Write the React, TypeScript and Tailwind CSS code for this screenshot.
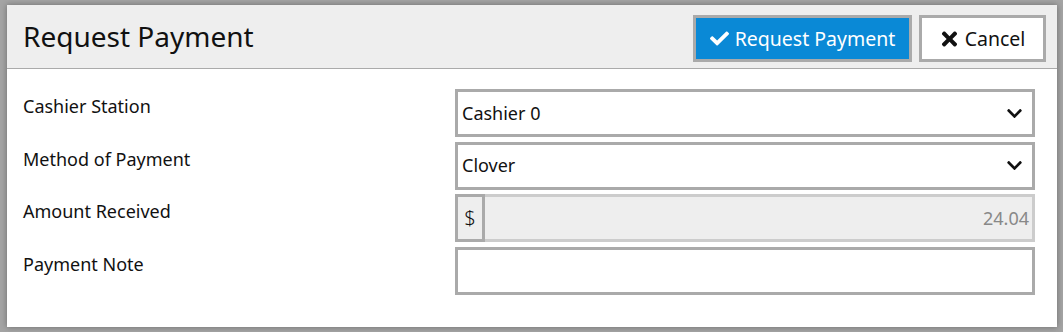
import { FaCheck, FaTimes, FaChevronDown } from "react-icons/fa";

type Row = {
  label: string;
  kind: "select" | "money" | "text";
  value?: string;
};

const rows: Row[] = [
  { label: "Cashier Station", kind: "select", value: "Cashier 0" },
  { label: "Method of Payment", kind: "select", value: "Clover" },
  { label: "Amount Received", kind: "money", value: "24.04" },
  { label: "Payment Note", kind: "text" },
];

function Field({ kind, value }: Row) {
  if (kind === "select") {
    return (
      <div className="flex h-[48px] items-center justify-between border-[3px] border-[#aaaaaa] bg-white pl-[4px] pr-[9px] text-[18px] text-[#111]">
        <span>{value}</span>
        <FaChevronDown className="h-[17px] w-[17px] text-[#111]" />
      </div>
    );
  }
  if (kind === "money") {
    return (
      <div className="flex h-[48px] border-[3px] border-[#cccccc] bg-[#eeeeee] text-[18px]">
        <div className="-my-[3px] -ml-[3px] flex w-[30px] items-center justify-center border-[3px] border-[#aaaaaa] bg-[#eeeeee] text-[20px] font-light text-[#111]">
          $
        </div>
        <div className="flex flex-1 items-center justify-end pr-[3px] text-[#888888]">{value}</div>
      </div>
    );
  }
  return <div className="h-[48px] border-[3px] border-[#aaaaaa] bg-white" />;
}

export default function App() {
  return (
    <div
      className="h-[332px] w-[1063px] bg-[#a4a4a4] pl-[7px] pt-[5px]"
      style={{ fontFamily: '"Noto Sans", "Open Sans", sans-serif' }}
    >
      <div className="h-[322px] w-[1050px] bg-white shadow-[0_0_6px_rgba(0,0,0,0.35)]">
        <div className="flex h-[64px] items-start justify-between border-b border-[#aaaaaa] bg-[#eeeeee] pl-[16px] pr-[11px]">
          <h1 className="pt-[14px] text-[28px] leading-[34px] text-[#111]">Request Payment</h1>
          <div className="flex gap-[7px] pt-[10px]">
            <button className="flex h-[47px] w-[219px] items-center justify-center gap-[6px] border-[3px] border-[#aaaaaa] bg-[#0a89d6] text-[19.5px] text-white">
              <FaCheck className="h-[19px] w-[19px]" />
              Request Payment
            </button>
            <button className="flex h-[47px] w-[127px] items-center justify-center gap-[6px] border-[3px] border-[#aaaaaa] bg-white text-[19.5px] text-[#111]">
              <FaTimes className="h-[22px] w-[19px]" />
              Cancel
            </button>
          </div>
        </div>
        <div className="flex flex-col gap-[4.5px] pl-[16px] pr-[22px] pt-[20px]">
          {rows.map((row, i) => (
            <div key={i} className="grid grid-cols-[432px_1fr]">
              <div className="pt-[5px] text-[18px] leading-[24px] text-[#111]">{row.label}</div>
              <Field {...row} />
            </div>
          ))}
        </div>
      </div>
    </div>
  );
}
